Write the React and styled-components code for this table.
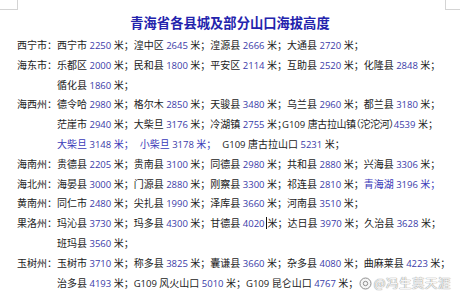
import React from "react";
import styled, { createGlobalStyle } from "styled-components";

const groups = [
  {
    label: "西宁市：",
    lines: [
      [
        { n: "西宁市", v: "2250" },
        { n: "湟中区", v: "2645" },
        { n: "湟源县", v: "2666" },
        { n: "大通县", v: "2720" },
      ],
    ],
  },
  {
    label: "海东市：",
    lines: [
      [
        { n: "乐都区", v: "2000" },
        { n: "民和县", v: "1800" },
        { n: "平安区", v: "2114" },
        { n: "互助县", v: "2520" },
        { n: "化隆县", v: "2848" },
      ],
      [{ n: "循化县", v: "1860" }],
    ],
  },
  {
    label: "海西州：",
    lines: [
      [
        { n: "德令哈", v: "2980" },
        { n: "格尔木", v: "2850" },
        { n: "天骏县", v: "3480" },
        { n: "乌兰县", v: "2960" },
        { n: "都兰县", v: "3180" },
      ],
      [
        { n: "茫崖市", v: "2940" },
        { n: "大柴旦", v: "3176" },
        { n: "冷湖镇", v: "2755" },
        { p: "G109", n: "唐古拉山镇（沱沱河）", v: "4539", tight: true },
      ],
      [
        { n: "大柴旦", v: "3148", blue: true },
        { n: "小柴旦", v: "3178", blue: true },
        { p: "G109", n: "唐古拉山口", v: "5231" },
      ],
    ],
  },
  {
    label: "海南州：",
    lines: [
      [
        { n: "贵德县", v: "2205" },
        { n: "贵南县", v: "3100" },
        { n: "同德县", v: "2980" },
        { n: "共和县", v: "2880" },
        { n: "兴海县", v: "3306" },
      ],
    ],
  },
  {
    label: "海北州：",
    lines: [
      [
        { n: "海晏县", v: "3000" },
        { n: "门源县", v: "2880" },
        { n: "刚察县", v: "3300" },
        { n: "祁连县", v: "2810" },
        { n: "青海湖", v: "3196", blue: true },
      ],
    ],
  },
  {
    label: "黄南州：",
    lines: [
      [
        { n: "同仁市", v: "2480" },
        { n: "尖扎县", v: "1990" },
        { n: "泽库县", v: "3660" },
        { n: "河南县", v: "3510" },
      ],
    ],
  },
  {
    label: "果洛州：",
    lines: [
      [
        { n: "玛沁县", v: "3730" },
        { n: "玛多县", v: "4300" },
        { n: "甘德县", v: "4020", caret: true },
        { n: "达日县", v: "3970" },
        { n: "久治县", v: "3628" },
      ],
      [{ n: "班玛县", v: "3560" }],
    ],
  },
  {
    label: "玉树州：",
    lines: [
      [
        { n: "玉树市", v: "3710" },
        { n: "称多县", v: "3825" },
        { n: "囊谦县", v: "3660" },
        { n: "杂多县", v: "4080" },
        { n: "曲麻莱县", v: "4223" },
      ],
      [
        { n: "治多县", v: "4193" },
        { p: "G109", n: "风火山口", v: "5010" },
        { p: "G109", n: "昆仑山口", v: "4767" },
      ],
    ],
  },
];

const GlobalStyle = createGlobalStyle`
  html, body {
    margin: 0;
    padding: 0;
    background: #ffffff;
  }
`;

const Page = styled.div`
  position: relative;
  width: 460px;
  height: 300px;
  overflow: hidden;
  box-sizing: border-box;
  padding: 13px 0 0 17px;
  font-family: "Noto Sans CJK SC", sans-serif;
  color: #222;

  &::before,
  &::after {
    content: "";
    position: absolute;
    top: 0;
    height: 9px;
    border-bottom: 1px solid #d4d4d4;
  }
  &::before {
    left: 0;
    width: 17px;
    border-right: 1px solid #d4d4d4;
  }
  &::after {
    left: 445px;
    width: 15px;
    border-left: 1px solid #d4d4d4;
  }
`;

const Title = styled.h1`
  margin: 0 0 2px -17px;
  text-align: center;
  font-size: 13.3px;
  line-height: 20px;
  font-weight: 700;
  color: #2323ad;
`;

const Group = styled.div`
  display: grid;
  grid-template-columns: 40px 1fr;
`;

const Label = styled.div`
  font-size: 10px;
  line-height: 19.8px;
  height: 19.8px;
  white-space: nowrap;
`;

const Lines = styled.div`
  display: flex;
  flex-direction: column;
`;

const Line = styled.div`
  font-size: 10px;
  line-height: 19.8px;
  height: 19.8px;
  white-space: nowrap;
`;

const Item = styled.span`
  color: ${(p) => (p.$blue ? "#3a3ab8" : "#222")};
  margin-right: ${(p) => (p.$blue ? "6px" : "0")};
`;

const Name = styled.span`
  letter-spacing: ${(p) => (p.$squeeze ? "-0.4px" : "0")};
`;

const Paren = styled.span`
  font-feature-settings: "halt";
`;

const Semi = styled.span`
  font-feature-settings: ${(p) => (p.$compact ? '"halt"' : "normal")};
`;

const Latin = styled.span`
  font-family: "Open Sans", sans-serif;
  font-size: 9.5px;
  line-height: 1;
`;

const Num = styled(Latin)`
  color: #3b3ba8;
`;

const Caret = styled.span`
  display: inline-block;
  width: 1px;
  height: 12px;
  margin: 0 1px;
  background: #111;
  vertical-align: -2px;
`;

const Watermark = styled.div`
  position: absolute;
  right: 9px;
  bottom: 9px;
  display: flex;
  align-items: center;
  gap: 2px;
  font-size: 12.5px;
  line-height: 16px;
  color: #f6f6f6;
  text-shadow: 0 0 1px #8f8f8f, 0 0 1px #8f8f8f;
  letter-spacing: 0.5px;
`;

function ItemName({ text, squeeze }) {
  if (!squeeze) return <Name>{text}</Name>;
  const parts = text.split(/([（）])/).filter(Boolean);
  return (
    <Name $squeeze>
      {parts.map((t, i) => (/[（）]/.test(t) ? <Paren key={i}>{t}</Paren> : t))}
    </Name>
  );
}

function Entry({ item, compact }) {
  return (
    <Item $blue={item.blue}>
      {item.p && <Latin>{item.p} </Latin>}
      <ItemName text={item.n} squeeze={item.tight} />
      {!item.tight && <Latin> </Latin>}
      <Num>{item.v}</Num>
      {item.caret ? <Caret /> : <Latin> </Latin>}
      米<Semi $compact={compact}>；</Semi>
    </Item>
  );
}

export default function App() {
  return (
    <>
      <GlobalStyle />
      <Page>
        <Title>青海省各县城及部分山口海拔高度</Title>
        {groups.map((g) => (
          <Group key={g.label}>
            <Label>{g.label}</Label>
            <Lines>
              {g.lines.map((line, i) => (
                <Line key={i}>
                  {line.map((item, j) => (
                    <Entry key={j} item={item} compact={!!(line[j + 1] && line[j + 1].tight)} />
                  ))}
                </Line>
              ))}
            </Lines>
          </Group>
        ))}
        <Watermark>
          <svg width="13" height="13" viewBox="0 0 13 13">
            <circle cx="6.5" cy="6.5" r="5.5" fill="#f6f6f6" stroke="#8f8f8f" strokeWidth="1" />
            <circle cx="6.5" cy="6.5" r="2.2" fill="none" stroke="#8f8f8f" strokeWidth="1" />
          </svg>
          <span>@冯生莫天涯</span>
        </Watermark>
      </Page>
    </>
  );
}
